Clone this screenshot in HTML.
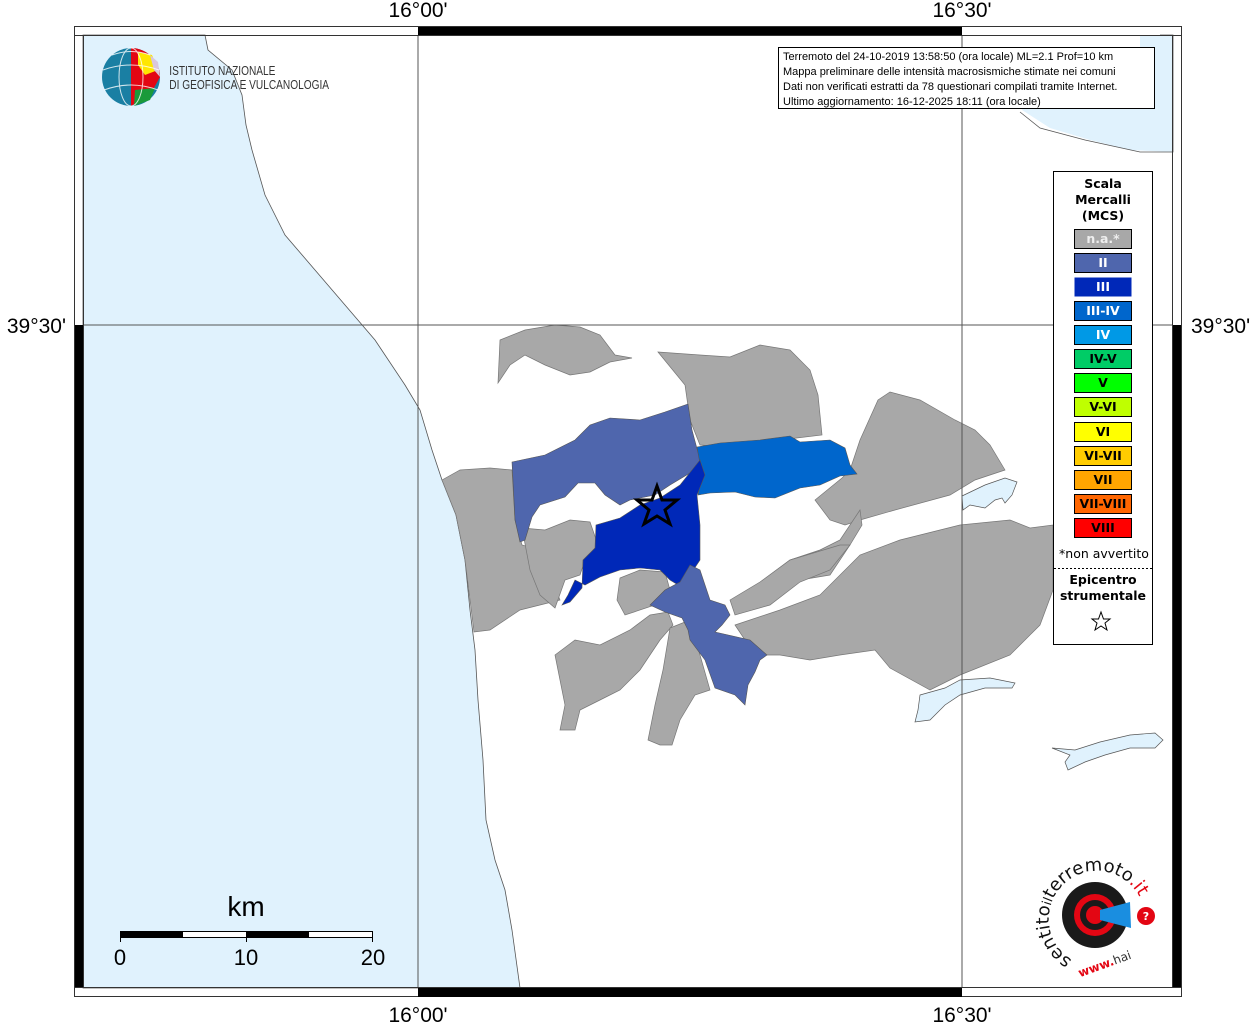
<!DOCTYPE html>
<html><head><meta charset="utf-8"><style>
html,body{margin:0;padding:0;background:#fff}
svg{display:block}
.dv{font-family:"DejaVu Sans",sans-serif}
</style></head><body>
<svg width="1255" height="1024" viewBox="0 0 1255 1024" xmlns="http://www.w3.org/2000/svg" font-family="Liberation Sans, sans-serif">
<rect width="1255" height="1024" fill="#fff"/>
<path d="M83,35 L205,35 L208,50 L232,70 L242,95 L246,125 L252,150 L265,195 L285,235 L315,270 L345,305 L375,340 L405,385 L420,410 L432,450 L442,480 L456,515 L465,560 L470,610 L475,650 L478,700 L483,760 L486,820 L495,860 L505,890 L512,930 L520,988 L83,988 Z" fill="#e0f2fd" stroke="#555" stroke-width="0.8"/>
<path d="M1022,110 L1050,128 L1090,140 L1130,150 L1173,152 L1173,35 L1140,35 L1140,60 L1120,70 L1100,72 L1130,60 L1080,55 L1040,60 Z" fill="#e0f2fd"/>
<path d="M1160,35 L1173,35 L1173,152 L1140,152 L1085,140 L1040,128 L1020,112" fill="none" stroke="#555" stroke-width="0.8"/>
<g fill="#a8a8a8" stroke="#777" stroke-width="0.7">
<path d="M500,340 L525,330 L555,325 L580,327 L600,335 L615,355 L632,358 L610,362 L590,372 L570,375 L545,365 L525,355 L510,365 L498,383 Z"/>
<path d="M658,352 L700,355 L730,357 L760,345 L790,350 L810,370 L818,395 L822,435 L780,440 L740,448 L700,445 L690,420 L685,385 Z"/>
<path d="M442,480 L460,470 L490,468 L512,470 L515,520 L522,545 L540,550 L560,600 L520,610 L490,630 L474,632 L465,560 L456,515 Z"/>
<path d="M522,528 L545,530 L570,520 L590,522 L598,545 L585,560 L580,575 L565,580 L555,608 L540,595 L530,570 Z"/>
<path d="M620,578 L640,570 L665,572 L670,590 L655,605 L625,615 L617,600 Z"/>
<path d="M850,470 L860,440 L878,400 L890,392 L920,400 L955,420 L975,430 L990,445 L1005,470 L975,480 L950,495 L895,510 L860,520 L845,525 L830,520 L815,500 L842,478 Z"/>
<path d="M760,600 L800,580 L830,575 L850,545 L862,525 L860,510 L840,540 L820,550 L790,560 L770,575 Z"/>
<path d="M730,600 L760,582 L790,560 L840,545 L850,545 L830,570 L800,582 L770,605 L735,615 Z"/>
<path d="M735,625 L780,610 L820,595 L860,555 L900,540 L960,525 L1010,520 L1030,528 L1053,525 L1053,590 L1040,625 L1010,655 L960,675 L930,690 L890,668 L875,650 L840,655 L810,660 L780,655 L760,655 L745,640 Z"/>
<path d="M555,655 L575,640 L600,645 L630,630 L650,615 L668,612 L673,625 L660,640 L640,670 L620,690 L600,700 L580,710 L575,730 L560,730 L565,705 L560,680 Z"/>
<path d="M670,628 L690,620 L710,690 L695,695 L680,720 L672,745 L660,745 L648,740 L655,705 L663,670 Z"/>
</g>
<g fill="#e0f2fd" stroke="#555" stroke-width="0.7">
<path d="M962,496 L985,485 L1005,478 L1017,482 L1012,495 L1005,503 L1002,498 L995,500 L985,508 L970,505 L963,510 Z"/>
<path d="M920,695 L945,688 L960,680 L990,678 L1015,683 L1012,688 L985,688 L960,695 L945,705 L930,720 L915,722 L918,710 Z"/>
<path d="M1052,748 L1075,750 L1100,742 L1130,735 L1155,733 L1163,740 L1155,748 L1130,748 L1105,755 L1085,762 L1068,770 L1065,762 L1070,755 Z"/>
</g>
<g stroke="#555" stroke-width="0.6">
<path d="M512,462 L545,455 L575,440 L590,425 L610,418 L640,420 L665,412 L688,404 L692,430 L700,460 L695,470 L670,485 L655,495 L630,500 L620,505 L605,495 L595,483 L578,483 L565,497 L540,505 L532,517 L525,540 L520,542 L515,520 Z" fill="#4f66ad"/>
<path d="M697,447 L720,443 L760,440 L790,436 L800,442 L830,440 L845,448 L850,465 L857,474 L840,476 L820,485 L800,488 L775,498 L755,497 L735,492 L710,493 L698,495 L702,475 Z" fill="#0066cc"/>
<path d="M700,460 L705,475 L697,495 L700,525 L700,560 L690,575 L683,588 L670,580 L660,570 L640,568 L620,570 L600,577 L585,585 L575,580 L568,595 L562,605 L570,602 L582,588 L583,560 L595,548 L596,525 L620,518 L640,505 L660,498 L680,485 L692,470 Z" fill="#0028b8"/>
<path d="M690,565 L700,570 L710,600 L725,605 L730,615 L722,625 L715,632 L750,640 L767,655 L760,660 L755,672 L748,685 L745,705 L735,695 L715,688 L705,660 L690,640 L688,630 L682,618 L665,612 L650,605 L665,590 L680,582 Z" fill="#4f66ad"/>
</g>
<g stroke="#555" stroke-width="1" fill="none">
<line x1="418" y1="35" x2="418" y2="988"/>
<line x1="962" y1="35" x2="962" y2="988"/>
<line x1="83" y1="325" x2="1173" y2="325"/>
</g>
<g stroke="#333" stroke-width="1" fill="none">
<rect x="74.5" y="26.5" width="1107" height="970"/>
<rect x="83.5" y="35.5" width="1089" height="952"/>
</g>
<g fill="#000">
<rect x="418" y="27" width="544" height="8"/>
<rect x="418" y="988" width="544" height="9"/>
<rect x="75" y="325" width="8" height="663"/>
<rect x="1173" y="325" width="8" height="663"/>
</g>
<g stroke="#333" fill="none">
<line x1="74" y1="35.5" x2="83" y2="35.5"/><line x1="74" y1="987.5" x2="83" y2="987.5"/>
<line x1="1173" y1="35.5" x2="1182" y2="35.5"/><line x1="1173" y1="987.5" x2="1182" y2="987.5"/>
</g>
<g font-size="21" fill="#000">
<text x="418" y="17" text-anchor="middle">16°00'</text>
<text x="962" y="17" text-anchor="middle">16°30'</text>
<text x="418" y="1022" text-anchor="middle">16°00'</text>
<text x="962" y="1022" text-anchor="middle">16°30'</text>
<text x="66" y="333" text-anchor="end">39°30'</text>
<text x="1191" y="333">39°30'</text>
</g>
<path d="M657,486 L662,500 L677,500 L665,510 L670,524 L657,516 L644,524 L649,510 L637,500 L652,500 Z" fill="none" stroke="#000" stroke-width="3"/>
<rect x="778.5" y="47.5" width="376" height="61" fill="#fff" stroke="#000"/>
<g font-size="11" fill="#000">
<text x="783" y="60">Terremoto del 24-10-2019 13:58:50 (ora locale) ML=2.1 Prof=10 km</text>
<text x="783" y="75">Mappa preliminare delle intensità macrosismiche stimate nei comuni</text>
<text x="783" y="90">Dati non verificati estratti da 78 questionari compilati tramite Internet.</text>
<text x="783" y="105">Ultimo aggiornamento: 16-12-2025 18:11 (ora locale)</text>
</g>
<rect x="1053.5" y="171.5" width="99" height="473" fill="#fff" stroke="#000"/>
<g class="dv" font-size="12.5" font-weight="bold" text-anchor="middle" fill="#000">
<text x="1103" y="188">Scala</text><text x="1103" y="204">Mercalli</text><text x="1103" y="220">(MCS)</text>
</g>
<g stroke="#000" stroke-width="1">
<rect x="1074.5" y="229.5" width="57" height="19" fill="#a8a8a8"/>
<rect x="1074.5" y="253.5" width="57" height="19" fill="#4f66ad"/>
<rect x="1074.5" y="277.5" width="57" height="19" fill="#0028b8" stroke="none"/>
<rect x="1074.5" y="301.5" width="57" height="19" fill="#0066cc"/>
<rect x="1074.5" y="325.5" width="57" height="19" fill="#0099e6"/>
<rect x="1074.5" y="349.5" width="57" height="19" fill="#00cc66"/>
<rect x="1074.5" y="373.5" width="57" height="19" fill="#00ff00"/>
<rect x="1074.5" y="397.5" width="57" height="19" fill="#bfff00"/>
<rect x="1074.5" y="422.5" width="57" height="19" fill="#ffff00"/>
<rect x="1074.5" y="446.5" width="57" height="19" fill="#ffcc00"/>
<rect x="1074.5" y="470.5" width="57" height="19" fill="#ffa500"/>
<rect x="1074.5" y="494.5" width="57" height="19" fill="#ff6600"/>
<rect x="1074.5" y="518.5" width="57" height="19" fill="#ff0000"/>
</g>
<g class="dv" font-size="12.5" font-weight="bold" text-anchor="middle">
<text x="1103" y="243" fill="#eee">n.a.*</text>
<text x="1103" y="267" fill="#fff">II</text>
<text x="1103" y="291" fill="#fff">III</text>
<text x="1103" y="315" fill="#fff">III-IV</text>
<text x="1103" y="339" fill="#fff">IV</text>
<text x="1103" y="363">IV-V</text>
<text x="1103" y="387">V</text>
<text x="1103" y="411">V-VI</text>
<text x="1103" y="436">VI</text>
<text x="1103" y="460">VI-VII</text>
<text x="1103" y="484">VII</text>
<text x="1103" y="508">VII-VIII</text>
<text x="1103" y="532">VIII</text>
</g>
<text class="dv" x="1104" y="558" font-size="12.5" text-anchor="middle">*non avvertito</text>
<line x1="1054" y1="568.5" x2="1152" y2="568.5" stroke="#000" stroke-dasharray="2,2"/>
<g class="dv" font-size="12.5" font-weight="bold" text-anchor="middle">
<text x="1103" y="584">Epicentro</text><text x="1103" y="600">strumentale</text>
</g>
<path d="M1101,612 L1103.5,619 L1110,619 L1105,623 L1107,630 L1101,626 L1095,630 L1097,623 L1092,619 L1098.5,619 Z" fill="none" stroke="#000"/>
<text x="246" y="916" font-size="28" text-anchor="middle">km</text>
<rect x="120.5" y="931.5" width="252" height="6" fill="#fff" stroke="#000"/>
<rect x="120" y="931" width="63" height="7" fill="#000"/>
<rect x="246" y="931" width="63" height="7" fill="#000"/>
<g stroke="#000"><line x1="120.5" y1="931" x2="120.5" y2="942"/><line x1="246.5" y1="931" x2="246.5" y2="942"/><line x1="372.5" y1="931" x2="372.5" y2="942"/></g>
<g font-size="22" text-anchor="middle">
<text x="120" y="965">0</text><text x="246" y="965">10</text><text x="373" y="965">20</text>
</g>
<circle cx="131" cy="77" r="29" fill="#1a7fa3"/>
<path d="M131,48 A29,29 0 0 1 160,77 L150,95 L131,106 Z" fill="#e30613"/>
<path d="M138,52 L152,55 L158,70 L145,75 L138,65 Z" fill="#ffe600"/>
<path d="M135,90 L155,88 L150,100 L134,106 Z" fill="#1a9a3a"/>
<path d="M150,55 L158,62 L160,77 L154,70 Z" fill="#d9c7dc"/>
<g stroke="#fff" stroke-width="1" fill="none" opacity="0.8">
<ellipse cx="131" cy="77" rx="12" ry="29"/><path d="M103,70 Q131,60 159,70 M104,90 Q131,80 158,90 M112,55 Q131,48 150,55"/>
</g>
<g font-size="13" fill="#333" transform="scale(0.78,1)">
<text x="217" y="75">ISTITUTO NAZIONALE</text>
<text x="217" y="89">DI GEOFISICA E VULCANOLOGIA</text>
</g>
<circle cx="1095" cy="915" r="33" fill="#1a1a1a"/>
<circle cx="1095" cy="915" r="21" fill="#e30613"/>
<circle cx="1095" cy="915" r="15" fill="#1a1a1a"/>
<circle cx="1095" cy="915" r="9" fill="#e30613"/>
<path d="M1100,910 L1130,902 L1131,928 L1100,920 Z" fill="#1a8ee0"/>
<circle cx="1146" cy="916" r="9" fill="#e30613"/>
<text class="dv" x="1146" y="920" font-size="11" font-weight="bold" fill="#fff" text-anchor="middle">?</text>
<defs><path id="arc" d="M1072,960 A48,48 0 1 1 1140,898"/></defs>
<text class="dv" font-size="18" fill="#111"><textPath href="#arc">sentito<tspan font-size="13">il</tspan>terremoto<tspan fill="#e30613">.it</tspan></textPath></text>
<text class="dv" x="1105" y="968" font-size="12" fill="#333" text-anchor="middle" transform="rotate(-20 1105 965)"><tspan fill="#e30613" font-weight="bold">www.</tspan>hai</text>
</svg>
</body></html>
